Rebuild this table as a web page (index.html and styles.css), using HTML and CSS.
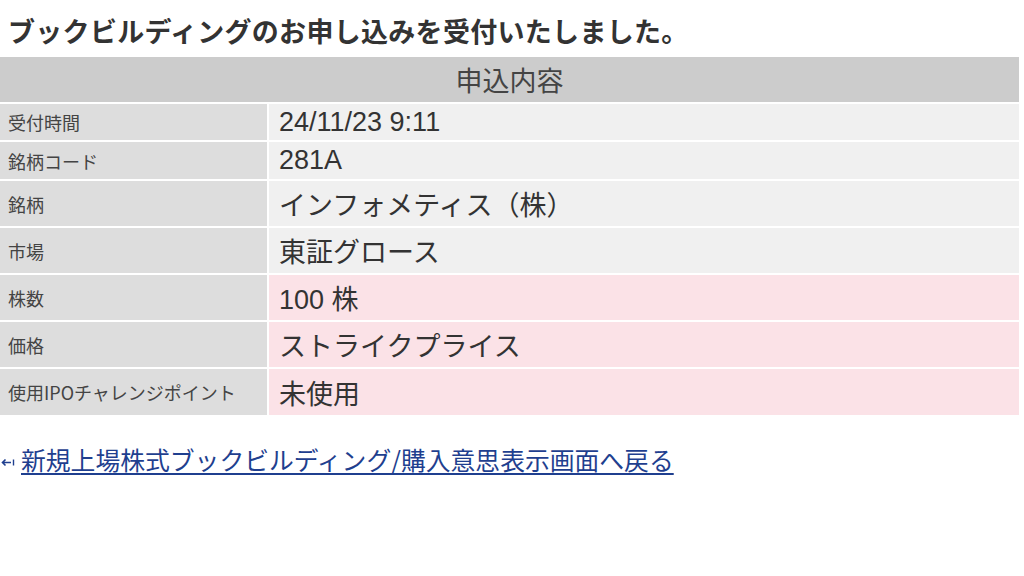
FILE: index.html
```html
<!DOCTYPE html>
<html lang="ja">
<head>
<meta charset="utf-8">
<link rel="stylesheet" href="styles.css">
</head>
<body>
<h1 class="title">ブックビルディングのお申し込みを受付いたしました。</h1>
<div class="grid">
  <div class="head">申込内容</div>
  <div class="label">受付時間</div><div class="value">24/11/23 9:11</div>
  <div class="label">銘柄コード</div><div class="value">281A</div>
  <div class="label">銘柄</div><div class="value">インフォメティス（株）</div>
  <div class="label">市場</div><div class="value">東証グロース</div>
  <div class="label">株数</div><div class="value pink">100 株</div>
  <div class="label">価格</div><div class="value pink">ストライクプライス</div>
  <div class="label">使用IPOチャレンジポイント</div><div class="value pink">未使用</div>
</div>
<p class="back">
  <svg class="arrow" width="14" height="9" viewBox="0 0 14 9"><path d="M1.5 4.5 H10 M4.5 1.5 L1.5 4.5 L4.5 7.5" fill="none" stroke="#1f3f8f" stroke-width="1.6"/><path d="M12.5 1.5 V7.5" stroke="#1f3f8f" stroke-width="1.4"/></svg>
  <a href="#" class="link">新規上場株式ブックビルディング/購入意思表示画面へ戻る</a>
</p>
</body>
</html>
```
FILE: styles.css
```css
html, body {
  margin: 0;
  padding: 0;
  background: #ffffff;
}
body {
  font-family: "Noto Sans CJK JP", "Liberation Sans", sans-serif;
  color: #333333;
}
.title {
  margin: 0;
  padding: 14px 0 0 8px;
  height: 43px;
  box-sizing: border-box;
  font-size: 27px;
  line-height: 34px;
  font-weight: bold;
  color: #333333;
  white-space: nowrap;
  letter-spacing: 0.3px;
}
.grid {
  display: grid;
  grid-template-columns: 267px 750px;
  grid-template-rows: 45px 36px 37px 45px 45px 45px 45px 46px;
  gap: 2px;
  margin-top: 14px;
  width: 1019px;
}
.head {
  grid-column: 1 / 3;
  background: #cccccc;
  display: flex;
  align-items: center;
  justify-content: center;
  font-size: 27px;
  color: #444444;
}
.label, .value {
  display: flex;
  align-items: center;
  white-space: nowrap;
}
.label {
  background: #dddddd;
  padding-left: 8px;
  font-size: 18px;
  color: #444444;
}
.value {
  background: #f0f0f0;
  padding-left: 10px;
  font-size: 27px;
  color: #333333;
  font-family: "Liberation Sans", "Noto Sans CJK JP", sans-serif;
}
.value.pink {
  background: #fbe2e7;
}
.back {
  margin: 26px 0 0 0;
  display: flex;
  align-items: center;
  gap: 6px;
  padding-left: 1px;
}
.arrow {
  margin-top: 6px;
}
.link {
  font-size: 24.8px;
  color: #1f3f8f;
  text-decoration: underline;
  text-underline-offset: 3px;
  text-decoration-thickness: 2px;
  white-space: nowrap;
}
```
